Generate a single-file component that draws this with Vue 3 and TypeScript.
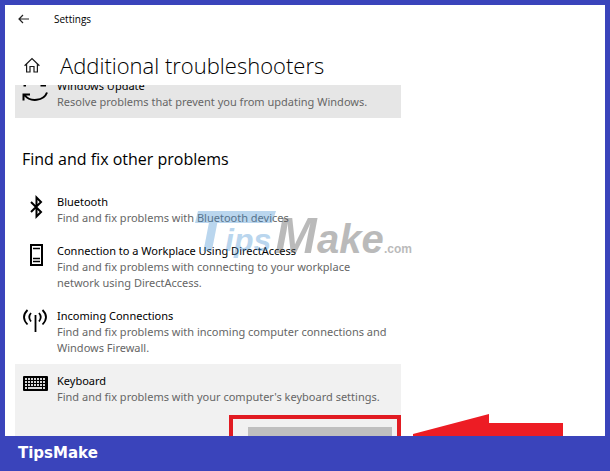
<script setup lang="ts">
interface Troubleshooter {
  id: string
  name: string
  description: string
}

const problems: Troubleshooter[] = [
  { id: 'bluetooth', name: 'Bluetooth', description: 'Find and fix problems with Bluetooth devices' },
  {
    id: 'workplace',
    name: 'Connection to a Workplace Using DirectAccess',
    description: 'Find and fix problems with connecting to your workplace network using DirectAccess.',
  },
  {
    id: 'incoming',
    name: 'Incoming Connections',
    description: 'Find and fix problems with incoming computer connections and Windows Firewall.',
  },
  {
    id: 'keyboard',
    name: 'Keyboard',
    description: "Find and fix problems with your computer's keyboard settings.",
  },
]

const selected = 'keyboard'
const keyColumns = [0, 1, 2, 3, 4, 5, 6]
</script>

<template>
  <div class="page">
    <main class="window">
      <header class="titlebar">
        <button class="icon-button" type="button" aria-label="Back">
          <svg width="12" height="10" viewBox="0 0 12 10" fill="none" stroke="#222" stroke-width="1.2">
            <path d="M11 5H1M5 1L1 5l4 4" />
          </svg>
        </button>
        <span>Settings</span>
      </header>

      <div class="heading">
        <button class="icon-button" type="button" aria-label="Home">
          <svg width="16" height="16" viewBox="0 0 16 16" fill="none" stroke="#1a1a1a" stroke-width="1.2">
            <path d="M.6 8.700L8 1.500l7.400 7.200M2.600 7V15H6V9.500h4V15h3.400V7" />
          </svg>
        </button>
        <h1>Additional troubleshooters</h1>
      </div>

      <div class="scroller">
        <div class="list">
          <section class="item update">
            <svg class="icon" width="28" height="28" viewBox="0 0 28 28" fill="none" stroke="#000" stroke-width="2">
              <path d="M2.500 8.500H5M19.500 8.500H25M26 15.500A12.500 10.500 0 0 1 3.500 18M2.500 23.500V17.500H9" />
            </svg>
            <div class="text">
              <h3>Windows Update</h3>
              <p>Resolve problems that prevent you from updating Windows.</p>
            </div>
          </section>

          <h2>Find and fix other problems</h2>

          <section
            v-for="problem in problems"
            :key="problem.id"
            class="item"
            :class="{ selected: problem.id === selected }"
          >
            <svg v-if="problem.id === 'bluetooth'" class="icon" width="28" height="28" viewBox="0 0 28 28" fill="none" stroke="#000" stroke-width="2">
              <path d="M10 9L20 19 15.500 23.500V4.500L20 9 10 19" />
            </svg>
            <svg v-else-if="problem.id === 'workplace'" class="icon" width="28" height="28" viewBox="0 0 28 28" fill="none" stroke="#000">
              <rect x="10" y="3" width="11" height="20" stroke-width="2" />
              <path d="M12 6.500h7M12 16.500h7M12 19.500h7" stroke-width="1.300" />
            </svg>
            <svg v-else-if="problem.id === 'incoming'" class="icon" width="28" height="28" viewBox="0 0 28 28" fill="none" stroke="#000" stroke-width="1.800">
              <path d="M14.500 8V25M6.500 3Q-.5 10 6.500 17.500M21.500 3Q28.500 10 21.500 17.500M10 6Q6.500 10 10 14.500M18 6Q21.500 10 18 14.500" />
            </svg>
            <svg v-else class="icon" width="28" height="28" viewBox="0 0 28 28">
              <rect x="2" y="4" width="25" height="15" rx="1" />
              <g fill="#d8d8d8">
                <template v-for="column in keyColumns" :key="column">
                  <rect :x="4 + column * 3" y="6" width="2" height="2" />
                  <rect :x="4 + column * 3" y="9" width="2" height="2" />
                  <rect :x="4 + column * 3" y="12" width="2" height="2" />
                </template>
                <rect x="4" y="15" width="2" height="2" />
                <rect x="7" y="15" width="14" height="2" />
                <rect x="22" y="15" width="2" height="2" />
              </g>
            </svg>
            <div class="text">
              <h3>{{ problem.name }}</h3>
              <p>{{ problem.description }}</p>
            </div>
            <div v-if="problem.id === selected" class="action">
              <button class="run" type="button" aria-label="Run the troubleshooter"></button>
              <span class="outline"></span>
              <svg class="arrow" width="150" height="60" viewBox="0 0 150 60">
                <path d="M0 20L76 0v9h74v36H76v10L0 30z" fill="#ed1c24" />
              </svg>
            </div>
          </section>
        </div>
      </div>

      <svg class="watermark" width="230" height="60" viewBox="0 0 230 60" aria-hidden="true">
        <g class="blue">
          <path d="M8 5H86L82 17H5z" />
          <text x="3" y="45" font-size="58">T</text>
          <text x="35" y="45" font-size="32">ips</text>
        </g>
        <g class="grey">
          <text x="85" y="47" font-size="50">M</text>
          <text x="127" y="47" font-size="40">ake</text>
          <text class="domain" x="194" y="47" font-size="12">.com</text>
        </g>
      </svg>
    </main>

    <footer class="brand">TipsMake</footer>
  </div>
</template>

<style>
body {
  margin: 0;
}
</style>

<style scoped>
.page {
  box-sizing: border-box;
  display: flex;
  flex-direction: column;
  height: 100vh;
  padding: 5px 5px 0;
  background: #3a44bb;
  color: #000;
  font-family: "Noto Sans", "Open Sans", sans-serif;
}

.window {
  position: relative;
  display: flex;
  flex: 1;
  flex-direction: column;
  min-height: 0;
  overflow: hidden;
  background: #fff;
}

.titlebar {
  display: flex;
  align-items: center;
  gap: 20px;
  height: 28px;
  padding-left: 9px;
  font-family: "Open Sans", sans-serif;
  font-size: 10px;
}

.icon-button {
  display: flex;
  align-items: center;
  justify-content: center;
  width: 20px;
  height: 20px;
  padding: 0;
  border: 0;
  background: none;
}

.heading {
  display: flex;
  align-items: center;
  gap: 18px;
  height: 52px;
  padding: 0 0 0 17px;
}

.heading .icon-button {
  margin-top: 12px;
}

h1,
h2,
h3,
p {
  margin: 0;
  font-weight: 400;
}

h1 {
  padding-top: 12px;
  font-family: "Open Sans", sans-serif;
  font-size: 22px;
  font-weight: 300;
  line-height: 32px;
}

h2 {
  padding: 30px 0 15px 7px;
  font-family: "Open Sans", sans-serif;
  font-size: 16px;
  line-height: 22px;
}

.scroller {
  flex: 1;
  min-height: 0;
  overflow: hidden;
}

.list {
  max-width: 386px;
  margin: -16px 10px 0;
}

.item {
  display: grid;
  grid-template-columns: 28px 1fr;
  column-gap: 8px;
  padding: 8px 9px 8px 6px;
}

.update {
  background: #e6e6e6;
}

.selected {
  background: #f1f1f1;
}

h3 {
  font-size: 11px;
  line-height: 17px;
}

p {
  color: #666;
  font-size: 11px;
  line-height: 16px;
}

.action {
  position: relative;
  grid-column: 1 / -1;
  justify-self: end;
  margin-top: 22px;
}

.run {
  display: block;
  width: 144px;
  height: 32px;
  border: 0;
  background: #bfbfbf;
}

.outline {
  position: absolute;
  inset: -12px -9px -12px -19px;
  border: 4px solid #e11b22;
}

.arrow {
  position: absolute;
  top: -13px;
  left: 165px;
}

.watermark {
  position: absolute;
  top: 201px;
  left: 185px;
  font-family: "Liberation Sans", sans-serif;
  font-style: italic;
  font-weight: 700;
}

.blue {
  fill: #3b8bd0;
  opacity: 0.35;
}

.grey {
  fill: #555;
  opacity: 0.4;
}

.domain {
  font-style: normal;
}

.brand {
  padding: 0 13px;
  color: #fff;
  font-family: "DejaVu Sans", sans-serif;
  font-size: 15px;
  font-weight: 700;
  line-height: 35px;
}
</style>
